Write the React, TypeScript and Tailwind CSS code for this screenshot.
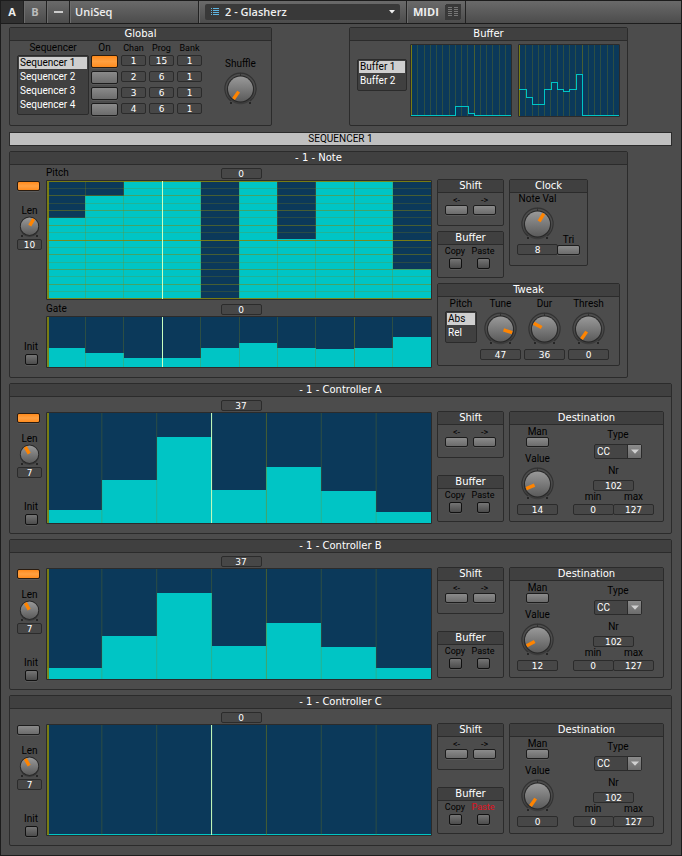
import { useId, useState } from 'react'
import type { ReactNode } from 'react'

const LABEL = "font-['Roboto',sans-serif] text-[10px] leading-[10px] text-black whitespace-nowrap"
const SMALL = "font-['Roboto',sans-serif] text-[9px] leading-[10px] text-black whitespace-nowrap"

interface PanelProps {
  readonly title: string
  readonly className?: string
  readonly children: ReactNode
}

function Panel({ title, className = '', children }: PanelProps) {
  return (
    <section className={`flex flex-col border border-[#2b2b2b] rounded-[2px] ${className}`}>
      <h2 className="h-[13px] shrink-0 border-b border-[#2b2b2b] bg-[#404040] text-center font-['DejaVu_Sans',sans-serif] text-[10px] leading-[12px] text-white whitespace-pre">
        {title}
      </h2>
      {children}
    </section>
  )
}

interface ValueBoxProps {
  readonly value: string
  readonly label?: string
  readonly id?: string
  readonly className?: string
}

function ValueBox({ value, label, id, className = 'w-[41px]' }: ValueBoxProps) {
  return (
    <input
      id={id}
      aria-label={label}
      defaultValue={value}
      className={`block h-[11px] min-w-0 shrink-0 rounded-[2px] border border-[#2b2b2b] bg-[#474747] p-0 text-center font-['DejaVu_Sans',sans-serif] text-[9px] leading-[9px] text-white outline-none ${className}`}
    />
  )
}

interface PadProps {
  readonly label?: string
  readonly id?: string
  readonly lit?: boolean
  readonly dark?: boolean
  readonly className?: string
}

function Pad({ label, id, lit = false, dark = false, className = 'w-[23px] h-[10px]' }: PadProps) {
  const [on, setOn] = useState(lit)
  let face = 'border-[#1c1c1c] bg-linear-to-b from-[#8b8b8b] to-[#6c6c6c]'
  if (dark) face = 'border-[#111] bg-linear-to-b from-[#757575] to-[#4c4c4c]'
  if (on) face = 'border-[#2a1c10] bg-linear-to-b from-[#ff8a18] via-[#ffa040] to-[#ff8c1c]'
  return (
    <button
      id={id}
      type="button"
      aria-label={label}
      aria-pressed={on}
      onClick={() => setOn(!on)}
      className={`block shrink-0 rounded-[2px] border shadow-[0_1px_0_#5a5a5a] ${face} ${className}`}
    />
  )
}

interface KnobProps {
  readonly label: string
  readonly angle: number
}

function Knob({ label, angle }: KnobProps) {
  return (
    <div className="relative h-[34px] w-[35px] shrink-0">
      <svg viewBox="0 0 35 34" className="block h-full w-full">
        <defs>
          <linearGradient id="knob-face" x1="0" y1="0" x2="0" y2="1">
            <stop offset="0" stopColor="#999" />
            <stop offset="1" stopColor="#5b5b5b" />
          </linearGradient>
        </defs>
        <path d="M7.8 29A15.6 15.6 0 1 1 27.2 29" fill="none" stroke="#323232" strokeWidth="1.2" />
        <path d="M17.5 0.8V4" stroke="#323232" />
        <circle cx="17.5" cy="18.4" r="13.8" fill="#2b2b2b" opacity="0.5" />
        <circle cx="17.5" cy="17" r="13.4" fill="#262626" />
        <circle cx="17.5" cy="17" r="12.5" fill="url(#knob-face)" />
        <rect x="7" y="30" width="2" height="2" fill="#262626" />
        <rect x="26" y="30" width="2" height="2" fill="#262626" />
        <rect x="15.8" y="4.8" width="3.4" height="9" fill="#ff8400" transform={`rotate(${angle} 17.5 17)`} />
      </svg>
      <input type="range" aria-label={label} className="absolute inset-0 h-full w-full opacity-0" />
    </div>
  )
}

function SmallKnob({ label, angle }: KnobProps) {
  return (
    <div className="relative h-[23px] w-[25px] shrink-0">
      <svg viewBox="0 0 25 23" className="block h-full w-full">
        <circle cx="12.5" cy="11.4" r="9.6" fill="#2b2b2b" opacity="0.6" />
        <circle cx="12.5" cy="10.2" r="9.6" fill="#262626" />
        <circle cx="12.5" cy="10.2" r="8.7" fill="url(#knob-face)" />
        <rect x="4" y="19" width="2" height="2" fill="#262626" />
        <rect x="19" y="19" width="2" height="2" fill="#262626" />
        <rect x="10.8" y="1.8" width="3.4" height="7.8" fill="#ff8400" transform={`rotate(${angle} 12.5 10.2)`} />
      </svg>
      <input type="range" aria-label={label} className="absolute inset-0 h-full w-full opacity-0" />
    </div>
  )
}

interface ListProps {
  readonly label: string
  readonly items: string[]
  readonly className?: string
}

function List({ label, items, className = '' }: ListProps) {
  const [current, setCurrent] = useState(0)
  return (
    <div role="group" aria-label={label} className={`rounded-[2px] border border-[#2b2b2b] bg-[#404040] p-px ${className}`}>
      {items.map((item, i) => (
        <button
          key={item}
          type="button"
          onClick={() => setCurrent(i)}
          className={`block h-[14px] w-full whitespace-nowrap border-b-2 border-[#404040] pl-px text-left font-['Roboto',sans-serif] text-[10px] leading-[12px] ${
            i === current ? 'bg-[#cfcfcf] text-black' : 'text-white'
          }`}
        >
          {item}
        </button>
      ))}
    </div>
  )
}

interface StepChartProps {
  readonly values: number[]
  readonly max: number
  readonly playhead?: number
  readonly accent?: number
  readonly rows?: boolean
  readonly className: string
}

function StepChart({ values, max, playhead, accent, rows = false, className }: StepChartProps) {
  const n = values.length
  const w = n * 100
  return (
    <div className="rounded-[1px] border border-[#2b2b2b] bg-[#0b395a]">
      <svg viewBox={`0 0 ${w} ${max}`} preserveAspectRatio="none" shapeRendering="crispEdges" className={`block w-full ${className}`}>
        {values.map((v, i) => (
          <rect key={i} x={i * 100} y={max - v} width={100} height={v} fill="#00c5c5" />
        ))}
        {values.map((_, i) => (
          <line
            key={i}
            x1={i * 100}
            x2={i * 100}
            y1={0}
            y2={max}
            stroke="#84840c"
            strokeOpacity={i === 0 ? 0.9 : i === accent ? 0.5 : 0.28}
            strokeWidth={i === 0 ? 3 : 1}
            vectorEffect="non-scaling-stroke"
          />
        ))}
        {rows &&
          Array.from({ length: 17 }, (_, i) => (
            <line
              key={i}
              x1={0}
              x2={w}
              y1={(i * max) / 16}
              y2={(i * max) / 16}
              stroke="#84840c"
              strokeOpacity={i % 8 === 0 ? 0.9 : i % 2 === 0 ? 0.5 : 0.25}
              strokeWidth={i % 16 === 0 ? 2 : 1}
              vectorEffect="non-scaling-stroke"
            />
          ))}
        {playhead !== undefined && (
          <line x1={playhead * 100} x2={playhead * 100} y1={0} y2={max} stroke="#c8ffc0" strokeWidth={1} vectorEffect="non-scaling-stroke" />
        )}
      </svg>
    </div>
  )
}

function BufferChart({ line }: { readonly line: string }) {
  return (
    <div className="w-[102px] rounded-[1px] border border-[#2b2b2b] bg-[#0b395a]">
      <svg viewBox="0 0 100 71" className="block h-[71px] w-full" shapeRendering="crispEdges">
        {Array.from({ length: 16 }, (_, i) => (
          <rect key={i} x={Math.round(i * 6.25)} y={0} width={1} height={71} fill="#84840c" fillOpacity={i === 0 ? 0.9 : i === 10 ? 0.5 : 0.28} />
        ))}
        <path d={line} fill="none" stroke="#00c5c5" />
      </svg>
    </div>
  )
}

interface ChannelStripProps {
  readonly name: string
  readonly len: string
  readonly angle: number
  readonly on: boolean
  readonly tall?: boolean
}

function ChannelStrip({ name, len, angle, on, tall = false }: ChannelStripProps) {
  const id = useId()
  return (
    <div className={`flex w-9 shrink-0 flex-col pt-4 pl-[7px] ${tall ? 'pb-3' : 'pb-2'}`}>
      <Pad label={`${name} on`} lit={on} />
      <div className={`flex w-[25px] flex-col items-center ${tall ? 'mt-[15px]' : 'mt-[11px]'}`}>
        <label htmlFor={`${id}-len`} className={LABEL}>Len</label>
        <SmallKnob label={`${name} length`} angle={angle} />
        <ValueBox id={`${id}-len`} value={len} className="w-[25px]" />
      </div>
      <div className="mt-auto flex w-[28px] flex-col items-center gap-[2px]">
        <label htmlFor={`${id}-init`} className={LABEL}>Init</label>
        <Pad id={`${id}-init`} dark className="h-[11px] w-[13px]" />
      </div>
    </div>
  )
}

function ShiftPanel() {
  return (
    <Panel title="Shift" className="h-[47px] w-[67px]">
      <div className="flex justify-center gap-[5px] pt-[2px]">
        {['<-', '->'].map((arrow) => (
          <label key={arrow} className={`flex flex-col items-center ${SMALL}`}>
            {arrow}
            <Pad />
          </label>
        ))}
      </div>
    </Panel>
  )
}

function CopyPanel({ pasteAlert = false }: { readonly pasteAlert?: boolean }) {
  return (
    <Panel title="Buffer" className="h-[47px] w-[67px]">
      <div className="flex pt-px pl-[3px]">
        <label className={`flex w-7 flex-col items-center gap-[2px] ${SMALL}`}>
          Copy
          <Pad dark className="h-[11px] w-[13px]" />
        </label>
        <label className={`flex w-7 flex-col items-center gap-[2px] ${SMALL}`}>
          <span className={pasteAlert ? 'text-[#e01020]' : ''}>Paste</span>
          <Pad dark className="h-[11px] w-[13px]" />
        </label>
      </div>
    </Panel>
  )
}

interface KnobFieldProps {
  readonly label: string
  readonly angle: number
  readonly value?: string
}

function KnobField({ label, angle, value }: KnobFieldProps) {
  const id = useId()
  return (
    <div className="flex w-[41px] shrink-0 flex-col items-center">
      <label htmlFor={id} className={`mb-[3px] ${LABEL}`}>{label}</label>
      <Knob label={label} angle={angle} />
      {value !== undefined && (
        <div className="mt-[3px]">
          <ValueBox id={id} value={value} />
        </div>
      )}
    </div>
  )
}

interface DestinationProps {
  readonly value: string
  readonly angle: number
}

function Destination({ value, angle }: DestinationProps) {
  const id = useId()
  return (
    <Panel title="Destination" className="h-[111px] w-[155px]">
      <div className="flex justify-between pr-[9px] pl-[7px]">
        <div className="flex flex-col items-center pt-[2px]">
          <label htmlFor={`${id}-man`} className={LABEL}>Man</label>
          <Pad id={`${id}-man`} />
          <div className="mt-[7px]">
            <KnobField label="Value" angle={angle} value={value} />
          </div>
        </div>
        <div className="flex w-[81px] flex-col items-center pt-[5px]">
          <div className="flex flex-col items-center gap-[4px] pl-[9px]">
            <label htmlFor={`${id}-type`} className={LABEL}>Type</label>
            <div className="relative flex h-[15px] w-[48px] rounded-[2px] border border-[#2b2b2b] bg-[#454545]">
              <select
                id={`${id}-type`}
                defaultValue="CC"
                className="h-full w-full appearance-none pl-[2px] font-['Roboto',sans-serif] text-[10px] leading-[12px] text-white outline-none"
              >
                <option>CC</option>
              </select>
              <span className="pointer-events-none absolute inset-y-0 right-0 flex w-[14px] items-center justify-center border-l border-[#2b2b2b] bg-linear-to-b from-[#8b8b8b] to-[#6c6c6c]">
                <svg viewBox="0 0 8 5" className="h-[5px] w-2">
                  <path d="M0 0.5H8L4 4.8Z" fill="#d0d0d0" />
                </svg>
              </span>
            </div>
          </div>
          <label htmlFor={`${id}-nr`} className={`mt-[7px] mb-[4px] ${LABEL}`}>Nr</label>
          <ValueBox id={`${id}-nr`} value="102" />
          <div className="mt-px flex">
            <label className={`flex w-[40px] flex-col items-center gap-[2px] ${LABEL}`}>
              min
              <ValueBox value="0" />
            </label>
            <label className={`flex w-[41px] flex-col items-center gap-[2px] ${LABEL}`}>
              max
              <ValueBox value="127" />
            </label>
          </div>
        </div>
      </div>
    </Panel>
  )
}

interface ControllerProps {
  readonly letter: string
  readonly values: number[]
  readonly step: string
  readonly on: boolean
  readonly dest: string
  readonly angle: number
  readonly playhead?: number
  readonly pasteAlert?: boolean
}

function Controller({ letter, values, step, on, dest, angle, playhead, pasteAlert }: ControllerProps) {
  const name = `Controller ${letter}`
  return (
    <Panel title={`- 1 - ${name}`}>
      <div className="flex">
        <ChannelStrip name={name} len="7" angle={-30} on={on} />
        <div className="min-w-0 flex-1 pt-[3px] pb-[9px]">
          <div className="mb-px flex justify-center pl-1">
            <ValueBox label={`${name} step value`} value={step} />
          </div>
          <StepChart values={values} max={110} playhead={playhead} accent={4} className="h-[110px]" />
        </div>
        <div className="flex shrink-0 gap-[5px] pt-[14px] pr-[7px] pb-[11px] pl-[5px]">
          <div className="flex flex-col justify-between">
            <ShiftPanel />
            <CopyPanel pasteAlert={pasteAlert} />
          </div>
          <Destination value={dest} angle={angle} />
        </div>
      </div>
    </Panel>
  )
}

function LaneHeader({ label, value }: { readonly label: string; readonly value: string }) {
  const id = useId()
  return (
    <div className="mb-px grid h-[11px] grid-cols-[1fr_41px_1fr] pl-1">
      <label htmlFor={id} className={`-ml-1 ${LABEL}`}>{label}</label>
      <ValueBox id={id} value={value} />
    </div>
  )
}

function NotePanel() {
  return (
    <Panel title="- 1 - Note" className="mr-11">
      <div className="flex">
        <ChannelStrip name="Note" len="10" angle={30} on tall />
        <div className="min-w-0 flex-1 pt-[3px] pb-[9px]">
          <LaneHeader label="Pitch" value="0" />
          <StepChart rows values={[81, 103, 118, 118, 0, 118, 60, 118, 118, 30]} max={118} playhead={3} accent={8} className="h-[118px]" />
          <div className="h-1" />
          <LaneHeader label="Gate" value="0" />
          <StepChart values={[19, 14, 9, 9, 19, 24, 19, 18, 19, 30]} max={50} playhead={3} accent={8} className="h-[50px]" />
        </div>
        <div className="flex shrink-0 flex-col gap-[5px] pt-[14px] pr-[7px] pl-[5px]">
          <div className="flex gap-[5px]">
            <div className="flex flex-col gap-[5px]">
              <ShiftPanel />
              <CopyPanel />
            </div>
            <Panel title="Clock" className="h-[87px] w-[79px]">
              <div className="flex items-end pt-px pl-[7px]">
                <KnobField label="Note Val" angle={31} value="8" />
                <label className={`-ml-px flex flex-col items-center ${LABEL}`}>
                  Tri
                  <Pad />
                </label>
              </div>
            </Panel>
          </div>
          <Panel title="Tweak" className="h-[83px] w-[183px]">
            <div className="flex gap-[3px] pt-[2px] pl-[7px]">
              <div className="flex w-8 flex-col items-center gap-[2px]">
                <span className={LABEL}>Pitch</span>
                <List label="Pitch mode" items={['Abs', 'Rel']} className="w-8" />
              </div>
              <KnobField label="Tune" angle={107} value="47" />
              <KnobField label="Dur" angle={-62} value="36" />
              <KnobField label="Thresh" angle={-145} value="0" />
            </div>
          </Panel>
        </div>
      </div>
    </Panel>
  )
}

const sequencers = [
  { on: true, chan: '1', prog: '15', bank: '1' },
  { on: false, chan: '2', prog: '6', bank: '1' },
  { on: false, chan: '3', prog: '6', bank: '1' },
  { on: false, chan: '4', prog: '6', bank: '1' },
]

function GlobalPanel() {
  return (
    <Panel title="Global" className="h-[99px] w-[263px]">
      <div className="flex pt-[2px] pl-[7px]">
        <div className="flex w-[72px] flex-col items-center gap-[2px]">
          <span className={LABEL}>Sequencer</span>
          <List label="Sequencer" items={['Sequencer 1', 'Sequencer 2', 'Sequencer 3', 'Sequencer 4']} className="h-[60px] w-[72px]" />
        </div>
        <div className="ml-[2px] flex flex-col gap-[3px]">
          <div className={`-mb-px flex items-center gap-[3px] text-center ${SMALL}`}>
            <span className={`w-[27px] ${LABEL}`}>On</span>
            <span className="w-[25px]">Chan</span>
            <span className="w-[25px]">Prog</span>
            <span className="w-[25px]">Bank</span>
          </div>
          {sequencers.map((s) => (
            <div key={s.chan} className="flex h-[13px] items-start gap-[3px]">
              <Pad label={`Sequencer ${s.chan} on`} lit={s.on} className="h-[13px] w-[27px]" />
              <ValueBox label={`Sequencer ${s.chan} channel`} value={s.chan} className="w-[25px]" />
              <ValueBox label={`Sequencer ${s.chan} program`} value={s.prog} className="w-[25px]" />
              <ValueBox label={`Sequencer ${s.chan} bank`} value={s.bank} className="w-[25px]" />
            </div>
          ))}
        </div>
        <div className="ml-[18px] pt-4">
          <KnobField label="Shuffle" angle={-145} />
        </div>
      </div>
    </Panel>
  )
}

function Header() {
  const cell = 'flex items-center border-r border-[#222] shadow-[inset_1px_0_0_#6d6d6d]'
  return (
    <header className="flex h-6 border-y border-[#1c1c1c] bg-linear-to-b from-[#6a6a6a] to-[#4c4c4c] font-['Open_Sans',sans-serif] text-[11px] font-semibold text-[#eee]">
      <button type="button" className="w-[23px] border-r border-[#222] bg-[#303030] font-bold">A</button>
      <button type="button" className={`w-[23px] justify-center font-bold text-[#bbb] ${cell}`}>B</button>
      <button type="button" aria-label="Collapse" className={`w-[23px] justify-center ${cell}`}>
        <span className="h-[2px] w-[9px] bg-[#ccc]" />
      </button>
      <h1 className={`w-[129px] pl-[5px] ${cell}`}>UniSeq</h1>
      <div className={`w-[208px] px-[6px] ${cell}`}>
        <div className="relative w-full">
          <select
            aria-label="Preset"
            defaultValue="2 - Glasherz"
            className="block h-4 w-full appearance-none rounded-[2px] bg-[#393939] pl-5 text-[11px] leading-4 font-semibold text-[#eee] outline-none"
          >
            <option>2 - Glasherz</option>
          </select>
          <svg viewBox="0 0 8 8" shapeRendering="crispEdges" className="pointer-events-none absolute top-1 left-[6px] h-2 w-2" fill="#5fb4e0">
            <path d="M0 0h1v1H0zM2 0h6v1H2zM0 2h1v1H0zM2 2h6v1H2zM0 4h1v1H0zM2 4h6v1H2zM0 6h1v1H0zM2 6h6v1H2z" />
          </svg>
          <svg viewBox="0 0 6 4" className="pointer-events-none absolute top-[6px] right-[5px] h-1 w-[6px]" fill="#eee">
            <path d="M0 0H6L3 3.6Z" />
          </svg>
        </div>
      </div>
      <div className={`w-[59px] gap-[6px] pl-[6px] ${cell}`}>
        <span className="text-[11px] font-bold">MIDI</span>
        <svg viewBox="0 0 16 16" shapeRendering="crispEdges" className="h-4 w-4">
          <rect width="16" height="16" rx="2" fill="#393939" />
          <path d="M3 3.5h4M9 3.5h4M3 5.5h4M9 5.5h4M3 7.5h4M9 7.5h4M3 9.5h4M9 9.5h4M3 11.5h4M9 11.5h4" stroke="#777" />
        </svg>
      </div>
    </header>
  )
}

export default function App() {
  return (
    <div className="min-h-screen border-x border-b border-[#1c1c1c] bg-[#4c4c4c]">
      <Header />
      <main className="flex flex-col gap-[5px] px-2 pt-[3px] pr-[9px] pb-[9px]">
        <div className="mr-11 flex justify-between">
          <GlobalPanel />
          <Panel title="Buffer" className="h-[99px] w-[279px]">
            <div className="flex items-start justify-between px-[7px] pt-[3px]">
              <List label="Buffer slot" items={['Buffer 1', 'Buffer 2']} className="mt-[15px] w-[50px]" />
              <div className="flex gap-[6px]">
                <BufferChart line="M0 70.5H44.5V61.5H57.5V68.5H63.5V70.5H100" />
                <BufferChart line="M0 44.5H7.5V52.5H13.5V59.5H25.5V44.5H32.5V37.5H38.5V44.5H44.5V46.5H50.5V44.5H57.5V29.5H63.5V70.5H100" />
              </div>
            </div>
          </Panel>
        </div>
        <h2 className="mt-px h-[14px] border border-[#2b2b2b] bg-[#c0c0c0] text-center font-['Roboto',sans-serif] text-[10px] leading-[12px] text-black">
          SEQUENCER 1
        </h2>
        <NotePanel />
        <Controller letter="A" values={[13, 43, 86, 33, 56, 32, 11]} step="37" on dest="14" angle={-112} playhead={3} />
        <Controller letter="B" values={[11, 43, 86, 33, 56, 32, 11]} step="37" on dest="12" angle={-118} />
        <Controller letter="C" values={[1, 1, 1, 1, 1, 1, 1]} step="0" on={false} dest="0" angle={-145} playhead={3} pasteAlert />
      </main>
    </div>
  )
}
